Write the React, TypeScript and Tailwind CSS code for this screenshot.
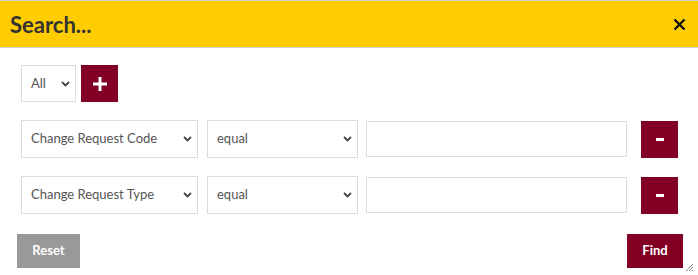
import React from 'react'

const Chevron = () => (
  <svg width="9" height="6" viewBox="0 0 9 6" className="shrink-0">
    <path d="M1 1l3.5 3.5L8 1" fill="none" stroke="#444" strokeWidth="1.8" />
  </svg>
)

interface FakeSelectProps {
  value: string
  className: string
}

const FakeSelect: React.FC<FakeSelectProps> = ({ value, className }) => (
  <div
    className={`flex items-center justify-between border border-[#dcdcdc] bg-white pl-[9px] pr-[5px] text-[13px] text-[#555] ${className}`}
  >
    <span>{value}</span>
    <Chevron />
  </div>
)

const MinusButton = () => (
  <button className="flex h-[37px] w-[37px] items-center justify-center bg-[#820024]">
    <span className="block h-[3px] w-[8px] bg-white" />
  </button>
)

const rows = ['Change Request Code', 'Change Request Type']

export default function App() {
  return (
    <div className="w-[698px] h-[275px] bg-white font-['Lato',sans-serif]">
      <div className="flex h-[48px] items-center justify-between border-y border-[#d0d0d0] bg-[#ffcc00] pl-[10px] pr-[12px]">
        <h1 className="text-[22px] font-bold text-[#333]">Search...</h1>
        <svg width="13" height="13" viewBox="0 0 13 13">
          <path d="M1.5 1.5l10 10M11.5 1.5l-10 10" stroke="#111" strokeWidth="2.4" />
        </svg>
      </div>

      <div className="px-[20px] pl-[21px]">
        <div className="mt-[17px] flex items-center gap-[5px]">
          <FakeSelect value="All" className="h-[37px] w-[55px]" />
          <button className="flex h-[37px] w-[37px] items-center justify-center bg-[#820024]">
            <svg width="16" height="16" viewBox="0 0 16 16">
              <path d="M8 1v14M1 8h14" stroke="#fff" strokeWidth="3" />
            </svg>
          </button>
        </div>

        <div className="mt-[18px] flex flex-col gap-[18px]">
          {rows.map((r) => (
            <div key={r} className="flex items-center">
              <FakeSelect value={r} className="h-[38px] w-[177px]" />
              <FakeSelect value="equal" className="ml-[9px] h-[38px] w-[151px]" />
              <input
                title="value"
                className="ml-[8px] h-[36px] w-[261px] border border-[#dcdcdc] outline-none"
                type="text"
              />
              <div className="ml-[14px]">
                <MinusButton />
              </div>
            </div>
          ))}
        </div>
      </div>

      <div className="mt-[20px] flex items-center justify-between pl-[17px] pr-[15px]">
        <button className="h-[34px] w-[63px] bg-[#999] text-[13px] font-bold text-white">Reset</button>
        <div className="relative">
          <button className="h-[34px] w-[56px] bg-[#820024] text-[13px] font-bold text-white">Find</button>
          <svg
            width="9"
            height="9"
            viewBox="0 0 9 9"
            className="absolute -right-[11px] bottom-[-4px]"
          >
            <path d="M8 1L1 8M8 4L4 8M8 7L7 8" stroke="#888" strokeWidth="1" />
          </svg>
        </div>
      </div>
    </div>
  )
}
